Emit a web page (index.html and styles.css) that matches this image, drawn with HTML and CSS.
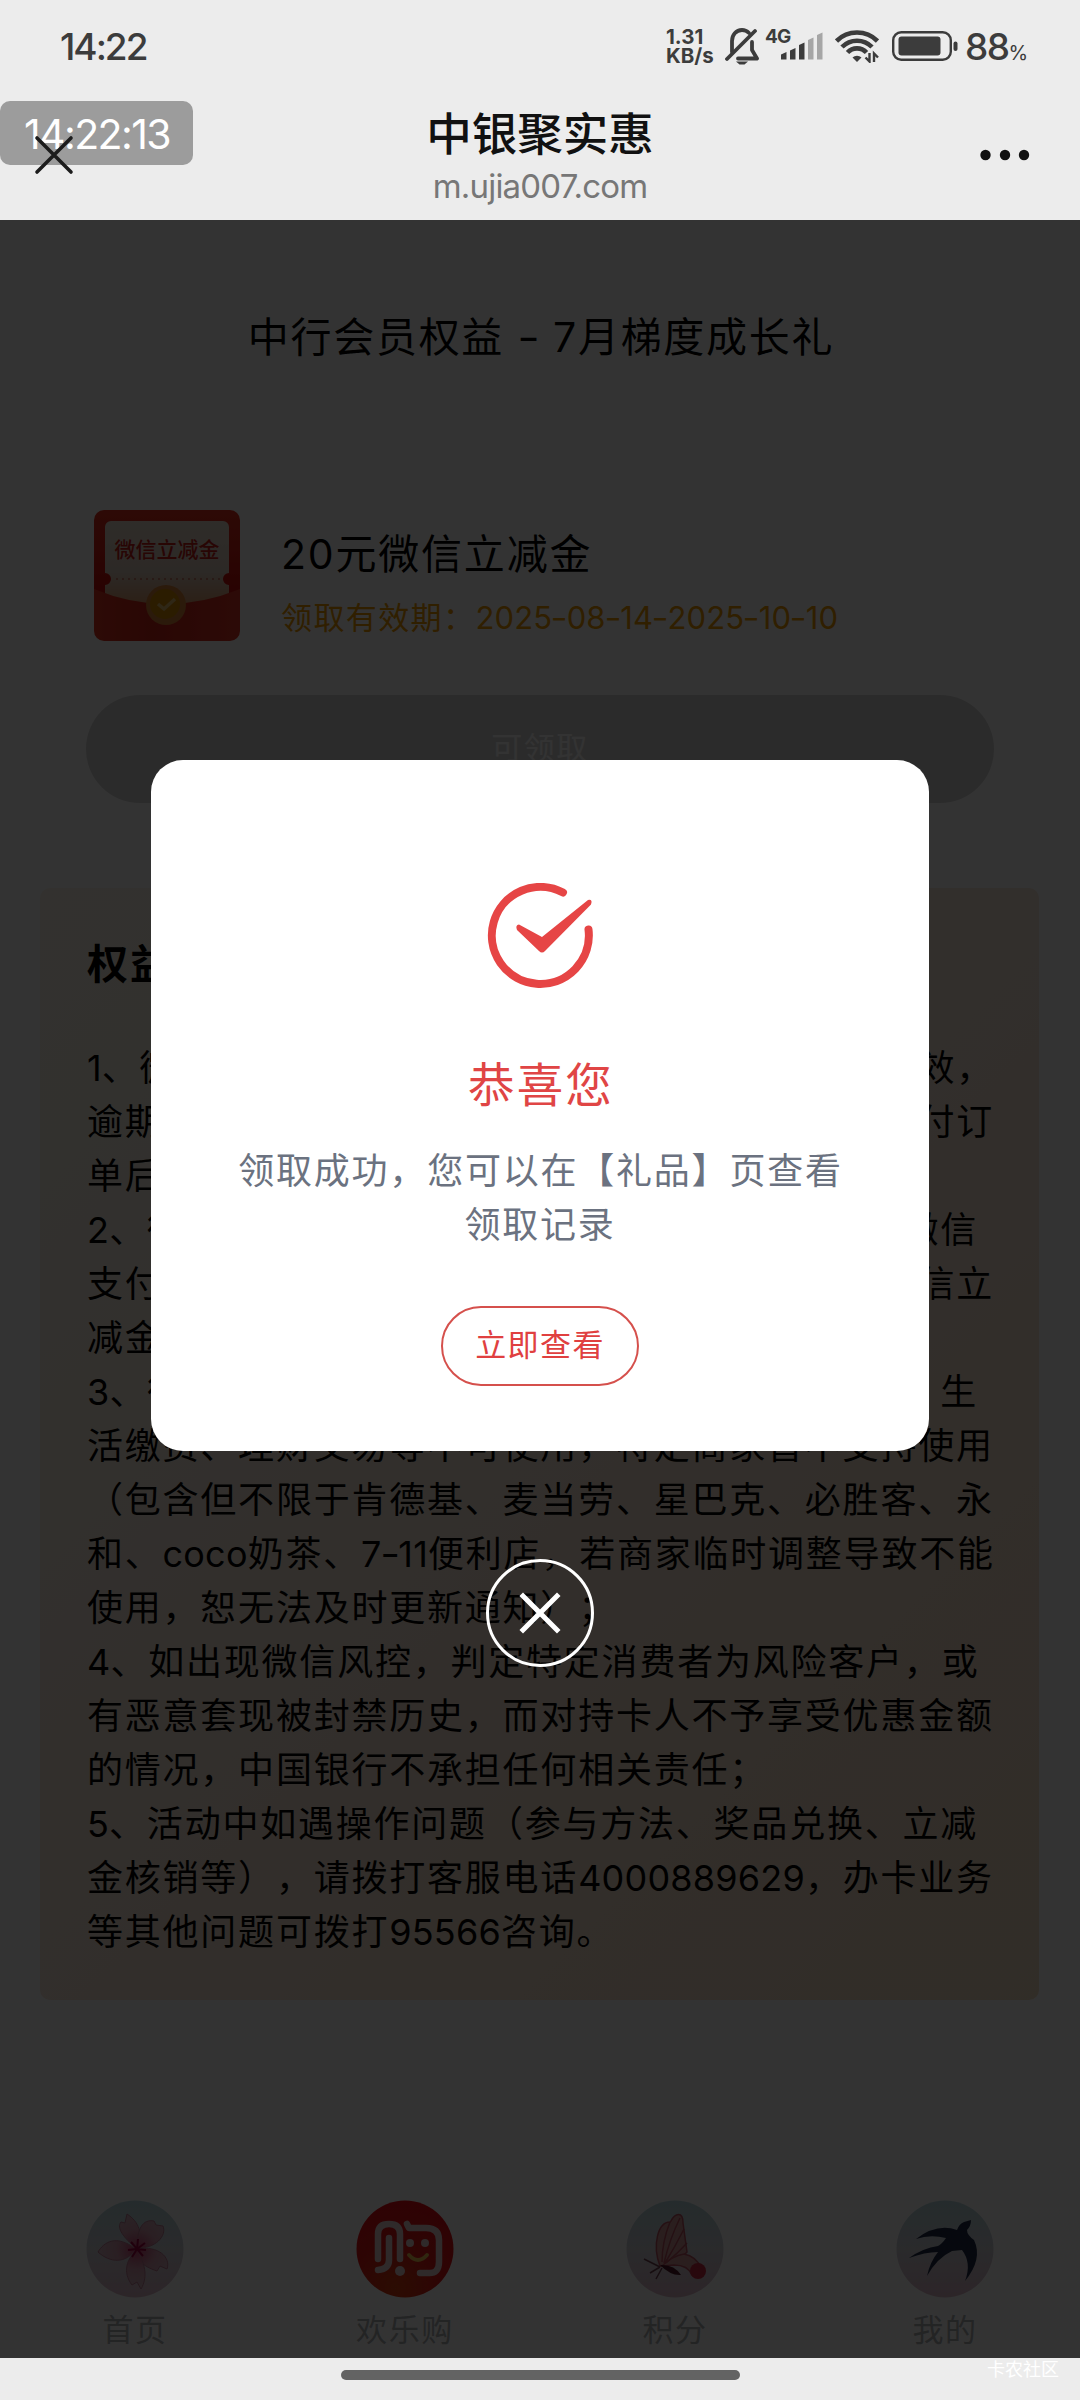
FILE: index.html
```html
<!DOCTYPE html>
<html lang="zh-CN">
<head>
<meta charset="utf-8">
<title>中银聚实惠</title>
<link rel="stylesheet" href="styles.css">
</head>
<body>
<header class="top">
  <div class="status">
    <span class="clock">14:22</span>
    <span class="speed"><span>1.31</span><span>KB/s</span></span>
    <svg class="bell" width="34" height="38" viewBox="0 0 34 38" fill="none" stroke="#3c3c3c" stroke-width="3.800" stroke-linecap="round" stroke-linejoin="round"><path d="M2 32 30 4"/><path d="M7 25V14c0-6 4-11 10-11 3 0 5 1 7 3"/><path d="M27 15v8l5 8.500H13"/><path d="M11 34.500h12l-3.500 3h-5z" fill="#3c3c3c" stroke="none"/></svg>
    <span class="net">4G</span>
    <svg class="bars" width="42" height="28" viewBox="0 0 42 28" fill="#3c3c3c"><path d="M0 22.500 5.500 20v7.500H0zM9 18.500l5.500-2.500v11.500H9zM18 13l5.500-2.500v17H18z"/><path fill="#a6a6a6" d="M27 8l5.500-2.500v22H27zM36 3l5.500-2.500v27H36z"/></svg>
    <svg class="wifi" width="44" height="34" viewBox="0 0 44 34" fill="none" stroke="#3c3c3c" stroke-width="4.600"><path d="M1.500 12a29 29 0 0 1 41 0"/><path d="M7 18a21 21 0 0 1 30 0"/><path d="M12.500 23.500a13 13 0 0 1 19 0"/><path d="M17.500 28.500a6.500 6.500 0 0 1 9 0L22 33z" fill="#3c3c3c" stroke="none"/><path d="M34.500 24v8.500l-4-4M39 33v-8.500l4 4" stroke-width="2.400"/></svg>
    <svg class="battery" width="66" height="30" viewBox="0 0 66 30"><rect x="1.200" y="1.200" width="57.600" height="27.600" rx="8" fill="none" stroke="#3c3c3c" stroke-width="2.400"/><rect x="6.500" y="5.500" width="42" height="19" rx="3" fill="#3c3c3c"/><rect x="61.500" y="10.500" width="4" height="9.500" rx="2" fill="#3c3c3c"/></svg>
    <span class="pct">88<small>%</small></span>
  </div>
  <div class="nav">
    <div class="heading"><h1>中银聚实惠</h1><p>m.ujia007.com</p></div>
    <svg class="dots" width="50" height="12" viewBox="0 0 50 12" fill="#111"><circle cx="5.500" cy="6" r="5.200"/><circle cx="25" cy="6" r="5.200"/><circle cx="44" cy="6" r="5.200"/></svg>
  </div>
  <svg class="close" width="40" height="40" viewBox="0 0 40 40" stroke="#1c1c1c" stroke-width="3.600" stroke-linecap="round"><path d="M3 3l34 34M37 3 3 37"/></svg>
  <div class="timer">14:22:13</div>
</header>
<main class="page">
  <h2 class="title">中行会员权益 <i>-</i> 7月梯度成长礼</h2>
  <section class="coupon">
    <svg class="packet" width="146" height="131" viewBox="0 0 146 131">
      <defs><linearGradient id="red" x2="0" y2="1"><stop stop-color="#e0301f"/><stop offset="1" stop-color="#c80808"/></linearGradient><linearGradient id="fold" x2="1" y2="0"><stop stop-color="#e03420"/><stop offset=".4" stop-color="#cc2418"/><stop offset="1" stop-color="#dc3424"/></linearGradient><linearGradient id="paper" x2="0" y2="1"><stop stop-color="#e8dccc"/><stop offset=".6" stop-color="#dccabc"/><stop offset="1" stop-color="#d89868"/></linearGradient></defs>
      <rect width="146" height="90" rx="10" fill="url(#red)"/>
      <path d="M17 11h112a6 6 0 0 1 6 6v46a6 6 0 0 0 0 12v22H11V75a6 6 0 0 0 0-12V17a6 6 0 0 1 6-6z" fill="url(#paper)"/>
      <path d="M22 69h104" stroke="#c88070" stroke-width="2" stroke-dasharray="2 4"/>
      <text x="73" y="47" text-anchor="middle" class="packet-text">微信立减金</text>
      <path d="M0 79q72 30 146 0v42a10 10 0 0 1-10 10H10a10 10 0 0 1-10-10z" fill="url(#fold)"/>
      <circle cx="72" cy="95" r="20" fill="#d88038"/><circle cx="71" cy="94" r="15" fill="#d88c00"/><path d="M64 94l6 5 11-10" fill="none" stroke="#e8c070" stroke-width="3.500"/>
    </svg>
    <div><h3>20元微信立减金</h3><p>领取有效期：<span class="date">2025<i>-</i>08<i>-</i>14<i>-</i>2025<i>-</i>10<i>-</i>10</span></p></div>
  </section>
  <div class="claim">可领取</div>
  <section class="rules">
    <h3>权益说明</h3>
    <div class="line split"><span><b>1</b>、微信</span><span>有效，</span></div>
    <div class="line split"><span>逾期</span><span>支付订</span></div>
    <div class="line">单后</div>
    <div class="line split short"><span><b>2</b>、微信</span><span>微信</span></div>
    <div class="line split"><span>支付</span><span>微信立</span></div>
    <div class="line">减金</div>
    <div class="line split short"><span><b>3</b>、微信</span><span>，生</span></div>
    <div class="line">活缴费、理财交易等不可使用，特定商家暂不支持使用</div>
    <div class="line">（包含但不限于肯德基、麦当劳、星巴克、必胜客、永</div>
    <div class="line">和、<b>coco</b>奶茶、<b>7<i>-</i>11</b>便利店，若商家临时调整导致不能</div>
    <div class="line">使用，恕无法及时更新通知）；</div>
    <div class="line"><b>4</b>、如出现微信风控，判定特定消费者为风险客户，或</div>
    <div class="line">有恶意套现被封禁历史，而对持卡人不予享受优惠金额</div>
    <div class="line">的情况，中国银行不承担任何相关责任；</div>
    <div class="line"><b>5</b>、活动中如遇操作问题（参与方法、奖品兑换、立减</div>
    <div class="line">金核销等），请拨打客服电话<b>4000889629</b>，办卡业务</div>
    <div class="line">等其他问题可拨打<b>95566</b>咨询。</div>
  </section>
  <nav class="tabs">
    <div class="tab"><svg width="98" height="98" viewBox="0 0 98 98">
      <defs><linearGradient id="sky" x2="0" y2="1"><stop stop-color="#b8d8de"/><stop offset=".5" stop-color="#d0d0d8"/><stop offset="1" stop-color="#dcb8c8"/></linearGradient><radialGradient id="petal" gradientUnits="userSpaceOnUse" cx="51" cy="49" r="40"><stop stop-color="#c84070"/><stop offset=".5" stop-color="#d098ac"/><stop offset="1" stop-color="#d4b4c0"/></radialGradient></defs>
      <circle cx="49" cy="49" r="48.500" fill="url(#sky)"/>
      <g fill="url(#petal)" stroke="#b87890" stroke-width="1"><path d="M50 48C38 38 30 28 35 22l4 1 2-9c12 8 17 20 9 34z"/><path d="M51 48c0-20 6-29 17-27l2 4 7 1c4 10-8 23-26 22z"/><path d="M50 49C30 34 18 42 12 52c12 11 28 12 38-3z"/><path d="M51 49c22-4 34 9 30 20l-7-3-3 5C56 66 48 58 51 49z"/><path d="M51 50c12 20 8 32 4 39l-4-7-5 3C36 72 41 58 51 50z"/></g>
      <path d="M51 49l-6-7m6 7 1-10m-1 10 8-6m-8 6-9 1m9-1-5 8m5-8 6 7m-6-7 9 1" stroke="#a00040" stroke-width="2"/></svg><span>首页</span></div>
    <div class="tab"><svg width="98" height="98" viewBox="0 0 98 98"><defs><radialGradient id="buy" cx=".4" cy=".9" r=".9"><stop stop-color="#d84010"/><stop offset=".5" stop-color="#e01818"/><stop offset="1" stop-color="#e80c14"/></radialGradient></defs><circle cx="49" cy="49" r="48.500" fill="url(#buy)"/>
      <g fill="none" stroke="#e8d0d0" stroke-width="6.500" stroke-linecap="round" stroke-linejoin="round"><path d="M22 59V34q0-10 11-10 11 0 11 10v25"/><path d="M33 38v22q0 9-11 10"/><path d="M51 24l2 4h17q13 0 13 12v22q0 12-11 11h-8"/></g><path d="M53 55q9 10 18 0" fill="none" stroke="#f0c050" stroke-width="4" stroke-linecap="round"/><g fill="#e8d0d0"><circle cx="54" cy="43" r="4"/><circle cx="69" cy="43" r="4"/><circle cx="44" cy="71" r="5"/></g></svg><span>欢乐购</span></div>
    <div class="tab"><svg width="98" height="98" viewBox="0 0 98 98"><circle cx="49" cy="49" r="48.500" fill="url(#sky)"/>
      <g fill="#d09898" stroke="#b85060" stroke-width="1.500"><path d="M34 66C26 45 32 22 44 22l1-1c4-8 12-10 12 2l4 29q-10 12-25 14z"/><path d="M36 66q10-10 22-12 12 2 18 15l-10 6q-4-10-18-10z"/><path d="M36 62q0-20 8-40m-6 41q6-25 16-45m-15 45q10-16 19-34m-18 34q12-10 21-20" fill="none"/></g><circle cx="72" cy="71" r="8" fill="#c82840"/><path d="M34 65q14-1 21 10-10 1-21-10z" fill="#501828"/><path d="M34 67l-16-8m16 8-10 6m12-5-6 11" stroke="#704050" stroke-width="1.500"/></svg><span>积分</span></div>
    <div class="tab"><svg width="98" height="98" viewBox="0 0 98 98"><circle cx="49" cy="49" r="48.500" fill="url(#sky)"/><path d="M75 20l-7 2q-5 2-7 8-20-7-41 9 14-5 30-1-4 6-8 8-15 2-29 12 16-6 29-6-8 10-11 24 10-18 25-25l10-1q10 13 3 31 18-22 9-41-7-5-7-10 4-4 4-10z" fill="#202c48"/></svg><span>我的</span></div>
  </nav>
  <div class="mask">
    <section class="dialog">
      <svg width="108" height="108" viewBox="0 0 108 108"><path d="M77 9.500A48.500 48.500 0 1 0 102.500 46.500" fill="none" stroke="#e64545" stroke-width="8" stroke-linecap="round"/><path d="M33 41.500 56 54 102 17q5-1 3 4.500L59 68q-3 3-6 0L31 47q-2-5 2-5.500z" fill="#e64545"/></svg>
      <h3>恭喜您</h3>
      <p>领取成功，您可以在【礼品】页查看<br>领取记录</p>
      <div class="view">立即查看</div>
    </section>
    <svg class="dismiss" width="108" height="108" viewBox="0 0 108 108" fill="none" stroke="#fff"><circle cx="54" cy="54" r="52.500" stroke-width="3"/><path d="M37 37l34 34M71 37 37 71" stroke-width="5" stroke-linecap="square"/></svg>
  </div>
</main>
<footer class="home"><div class="pill"></div><span class="mark">卡农社区</span></footer>
</body>
</html>
```

FILE: styles.css
```css
* { box-sizing: border-box; margin: 0; }
body { width: 1080px; height: 2400px; display: flex; flex-direction: column; background: #ececec; font-family: Inter, "Noto Sans CJK SC", sans-serif; text-spacing-trim: space-all; overflow: hidden; }
h1, h2, h3 { font-weight: 400; }
i { font-style: normal; display: inline-block; transform: scaleX(1.2); }
.top { height: 220px; position: relative; color: #3c3c3c; }
.status { height: 92px; display: flex; align-items: center; padding-left: 60px; }
.clock { width: 606px; font-size: 37px; font-weight: 500; letter-spacing: -2px; }
.speed { width: 59px; display: flex; flex-direction: column; font-size: 20.5px; line-height: 19px; font-weight: 700; }
.net { margin: -19px 0 0 6px; width: 27px; font-size: 19px; line-height: 20px; font-weight: 700; letter-spacing: -0.8px; }
.bars { margin-left: -11px; }
.wifi { margin-left: 12px; }
.battery { margin-left: 13px; }
.pct { margin-left: 7px; font-size: 37px; font-weight: 500; letter-spacing: -1.6px; }
.pct small { font-size: 20px; font-weight: 400; }
.nav { height: 128px; display: flex; justify-content: center; }
.heading { text-align: center; padding-top: 12px; }
.heading h1 { font-size: 45.5px; line-height: 62px; font-weight: 500; color: #111; }
.heading p { font-size: 33px; line-height: 44px; margin-top: -2px; color: #777; letter-spacing: -0.8px; }
.dots { position: absolute; left: 980px; top: 149px; }
.close { position: absolute; left: 34px; top: 135px; z-index: 1; }
.timer { position: absolute; left: 0; top: 101px; width: 193px; height: 64px; border-radius: 10px; background: #9c9c9c; color: #fff; font-size: 41px; line-height: 66px; padding-left: 24px; letter-spacing: -1.6px; }
.page { height: 2138px; position: relative; background: #fff; color: #000; display: flex; flex-direction: column; }
.title { margin-top: 87px; height: 60px; line-height: 60px; font-size: 41px; letter-spacing: 1.7px; text-indent: 2px; text-align: center; white-space: nowrap; }
.coupon { margin: 143px 0 0 94px; height: 131px; display: flex; gap: 41px; white-space: nowrap; }
.packet-text { font-size: 21px; font-weight: 500; fill: #c82018; }
.coupon h3 { font-size: 41px; line-height: 56px; margin-top: 16px; letter-spacing: 1.8px; }
.coupon p { font-size: 31px; line-height: 44px; margin-top: 14px; letter-spacing: 1.4px; color: #f09a00; }
.date { letter-spacing: 0.15px; }
.claim { margin: 54px 86px 0; height: 108px; border-radius: 54px; background: #d7d7d7; color: #fff; text-align: center; font-size: 31px; line-height: 105px; letter-spacing: 1.5px; }
.rules { margin: 85px 41px 0 40px; height: 1112px; padding: 47px 0 0 47px; border-radius: 10px; background: linear-gradient(135deg, #fcf6ea, #f8e8da 50%, #f6deC4); white-space: nowrap; }
.rules h3 { font-size: 41px; font-weight: 700; line-height: 58px; letter-spacing: 2px; margin-bottom: 48px; }
.line { height: 54px; line-height: 54px; font-size: 36px; letter-spacing: 1.78px; }
.line b { font-weight: 400; letter-spacing: 0.2px; }
.split { display: flex; justify-content: space-between; width: 907px; }
.short { width: 891px; }
.tabs { margin-top: 200px; display: flex; }
.tab { width: 270px; display: flex; flex-direction: column; align-items: center; font-size: 31px; line-height: 44px; letter-spacing: 1.6px; color: #b0b2b6; }
.tab span { margin-top: 10px; }
.mask { position: absolute; inset: 0; background: rgba(0, 0, 0, 0.8); display: flex; flex-direction: column; align-items: center; padding-top: 540px; }
.dialog { width: 778px; height: 691px; border-radius: 32px; background: #fff; display: flex; flex-direction: column; align-items: center; padding-top: 123px; text-align: center; }
.dialog h3 { font-size: 46.5px; line-height: 64px; margin-top: 62px; letter-spacing: 2.2px; text-indent: 2px; color: #e04545; }
.dialog p { font-size: 36px; line-height: 54px; margin-top: 27px; letter-spacing: 1.78px; text-indent: 1px; color: #6b7280; }
.view { width: 198px; height: 80px; margin-top: 54px; border: 2px solid #d5504c; border-radius: 40px; font-size: 31px; line-height: 74px; letter-spacing: 1.4px; color: #e04040; }
.dismiss { margin-top: 108px; }
.home { height: 42px; position: relative; display: flex; justify-content: center; padding-top: 12px; }
.pill { width: 399px; height: 10px; border-radius: 5px; background: #636363; }
.mark { position: absolute; right: 21px; top: 0; font-size: 18px; line-height: 24px; color: #fff; }
```
